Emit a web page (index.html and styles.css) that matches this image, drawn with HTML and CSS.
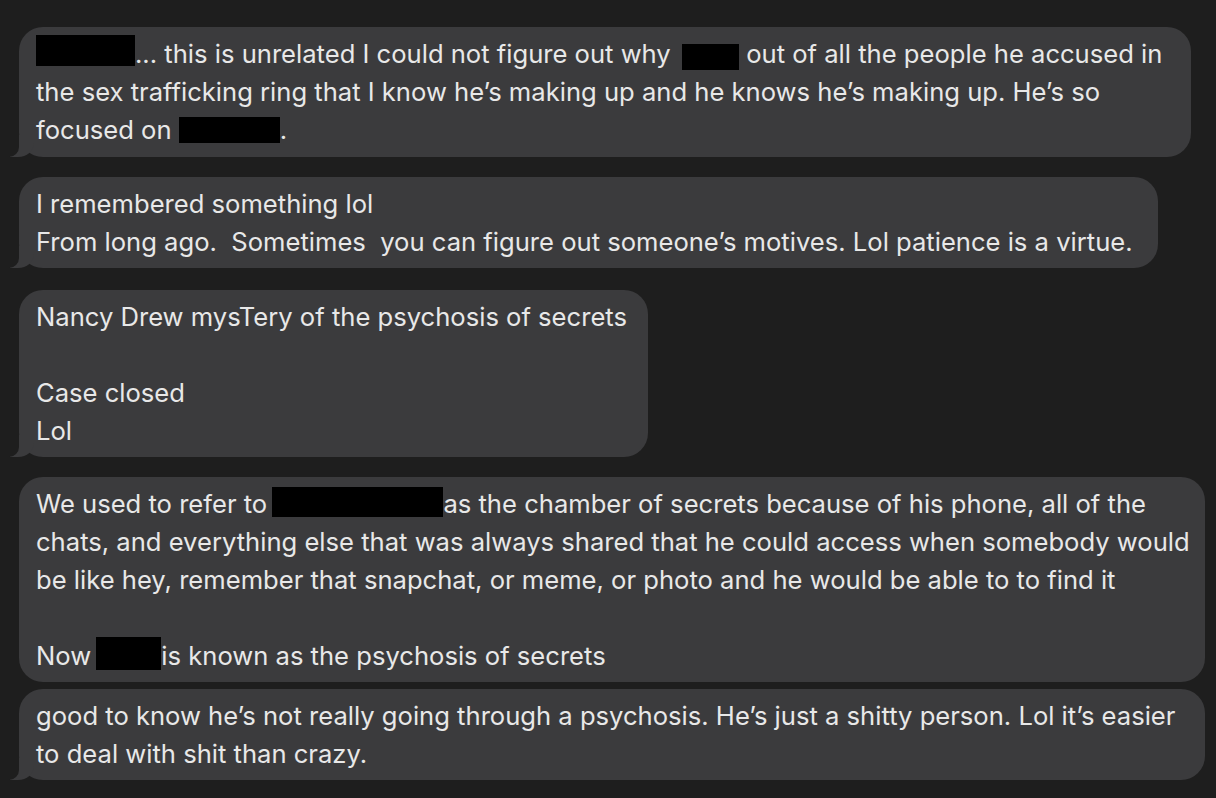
FILE: index.html
```html
<!DOCTYPE html>
<html>
<head>
<meta charset="utf-8">
<link rel="stylesheet" href="styles.css">
</head>
<body>
<div class="thread">
  <div class="bubble tail b1">
    <p><span class="redact r1"></span>... this is unrelated I could not figure out why <span class="redact r2"></span> out of all the people he accused in<br>the sex trafficking ring that I know he’s making up and he knows he’s making up. He’s so<br>focused on <span class="redact r3"></span>.</p>
  </div>
  <div class="bubble tail b2">
    <p>I remembered something lol<br>From long ago.&nbsp; Sometimes&nbsp; you can figure out someone’s motives. Lol patience is a virtue.</p>
  </div>
  <div class="bubble tail b3">
    <p>Nancy Drew mysTery of the psychosis of secrets<br><br>Case closed<br>Lol</p>
  </div>
  <div class="bubble b4">
    <p>We used to refer to <span class="redact r4"></span>as the chamber of secrets because of his phone, all of the<br>chats, and everything else that was always shared that he could access when somebody would<br>be like hey, remember that snapchat, or meme, or photo and he would be able to to find it<br><br>Now <span class="redact r5"></span>is known as the psychosis of secrets</p>
  </div>
  <div class="bubble tail b5">
    <p>good to know he’s not really going through a psychosis. He’s just a shitty person. Lol it’s easier<br>to deal with shit than crazy.</p>
  </div>
</div>
</body>
</html>
```
FILE: styles.css
```css
html, body {
  margin: 0;
  padding: 0;
  background: #1e1e1e;
}
body {
  width: 1216px;
  height: 798px;
  overflow: hidden;
  font-family: Inter, "Noto Sans", sans-serif;
}
.thread {
  display: flex;
  flex-direction: column;
  align-items: flex-start;
  padding: 27px 0 0 19px;
}
.bubble {
  position: relative;
  background: #3b3b3d;
  border-radius: 24px;
  padding: 7.5px 0 7.5px 17px;
  box-sizing: border-box;
  margin-bottom: 20px;
}
.bubble p {
  margin: 0;
  color: #e8e8e8;
  font-size: 25.6px;
  line-height: 38px;
  white-space: nowrap;
}
.b1 { width: 1172px; padding-top: 8px; padding-bottom: 8px; }
.b2 { width: 1139px; margin-bottom: 22px; }
.b3 { width: 629px; }
.b4 { width: 1186px; margin-bottom: 7px; }
.b5 { width: 1186px; }
.tail::before {
  content: "";
  position: absolute;
  left: -9px;
  bottom: 0;
  width: 24px;
  height: 22px;
  background: #3b3b3d;
  border-bottom-right-radius: 16px 14px;
  z-index: 0;
}
.tail::after {
  content: "";
  position: absolute;
  left: -12px;
  bottom: 0;
  width: 12px;
  height: 22px;
  background: #1e1e1e;
  border-bottom-right-radius: 10px;
  z-index: 1;
}
.redact {
  display: inline-block;
  background: #000;
}
.r1 { width: 99px; height: 31px; vertical-align: -3px; }
.r2 { width: 57px; height: 26px; vertical-align: -7px; margin-left: 4px; }
.r3 { width: 101px; height: 26px; vertical-align: -4px; }
.r4 { width: 171px; height: 30px; vertical-align: -4px; margin-left: -2px; }
.r5 { width: 65px; height: 33px; vertical-align: -5px; margin-left: -2px; }
```
